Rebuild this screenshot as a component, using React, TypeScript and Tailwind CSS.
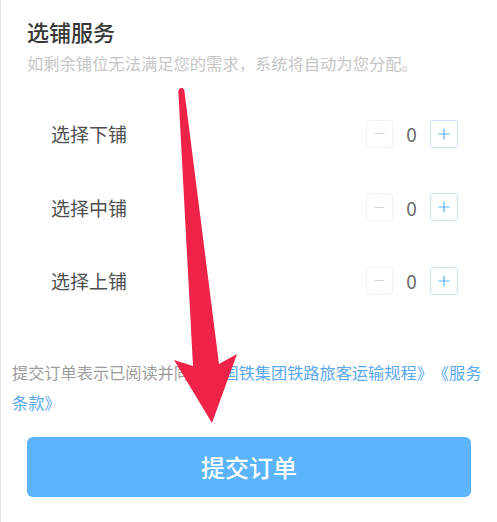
import React from "react";

const font = { fontFamily: '"Noto Sans CJK SC", "Noto Sans", sans-serif' };

function Stepper() {
  return (
    <div className="flex items-center">
      <div className="w-[27px] h-[28px] rounded-[3px] border border-[#f2f2f2] flex items-center justify-center text-[#d0d0d0]">
        <svg width="11" height="11" viewBox="0 0 11 11"><path d="M0.5 5.5h10" stroke="#d4d4d4" strokeWidth="1" /></svg>
      </div>
      <div className="w-[37px] text-center text-[19px] leading-none text-[#6a6a6a]">0</div>
      <div className="w-[28px] h-[28px] rounded-[3px] border border-[#cde2f6] flex items-center justify-center">
        <svg width="12" height="12" viewBox="0 0 12 12"><path d="M0.5 6h11M6 0.5v11" stroke="#5eaef2" strokeWidth="1.2" /></svg>
      </div>
    </div>
  );
}

function Row({ label }: { label: string }) {
  return (
    <div className="h-[73.5px] flex items-center justify-between pl-[24px] pr-[12px]">
      <span className="text-[19px] text-[#505050] leading-none">{label}</span>
      <Stepper />
    </div>
  );
}

export default function App() {
  return (
    <div className="relative w-[497px] h-[522px] bg-white overflow-hidden border-l border-[#e6e6e6] [text-spacing-trim:space-all]" style={font}>
      <div className="flex flex-col">
        <div className="pl-[26px] pr-[20px] pt-[16px]">
          <div className="text-[22px] leading-[30px] font-medium text-[#383838]">选铺服务</div>
          <div className="mt-[5px] text-[16.3px] leading-[24px] text-[#c6c6c6]">如剩余铺位无法满足您的需求，系统将自动为您分配。</div>
          <div className="mt-[22px] flex flex-col pr-[7px]">
            <Row label="选择下铺" />
            <Row label="选择中铺" />
            <Row label="选择上铺" />
          </div>
        </div>
        <p className="mt-[39px] pl-[11px] pr-[5px] text-[16.2px] leading-[30px] text-[#9c9c9c] [text-spacing-trim:space-all]">
          提交订单表示已阅读并同意<span className="text-[#5aa9ef]">《国铁集团铁路旅客运输规程》《服务条款》</span>
        </p>
        <div className="mt-[20px] pl-[26px] pr-[26px]">
          <button className="w-full h-[60px] rounded-[6px] bg-[#5cb4fd] text-white text-[24px] font-medium flex items-center justify-center">
            提交订单
          </button>
        </div>
      </div>
      <svg className="absolute left-0 top-0 pointer-events-none" width="497" height="522" viewBox="0 0 497 522">
        <path d="M177.3 91 Q179.5 85.5 183.2 89.5 L218 364 L236 354 L211 423 L173 360 L192 366 Z" fill="#ee2347" />
      </svg>
    </div>
  );
}
